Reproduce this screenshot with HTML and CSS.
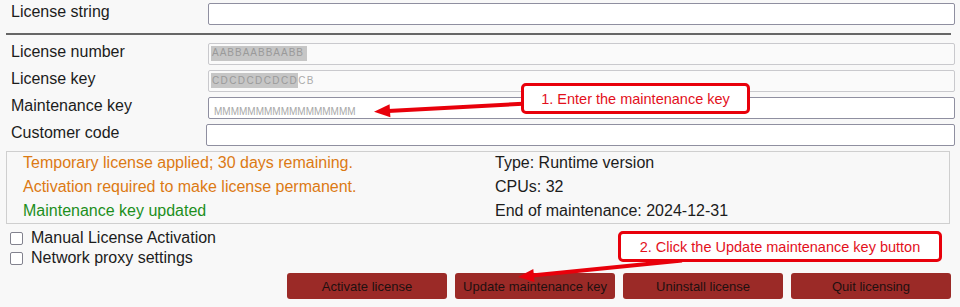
FILE: index.html
```html
<!DOCTYPE html>
<html lang="en">
<head>
    <meta charset="UTF-8">
    <meta name="viewport" content="width=device-width, initial-scale=1.0">
    <title>Licensing</title>
    <link rel="stylesheet" href="styles.css">
</head>
<body>

    <div class="panel">
        <div class="row">
            <span class="label">License string</span>
            <input class="field" type="text">
        </div>

        <hr class="divider">

        <div class="row">
            <span class="label">License number</span>
            <div class="field disabled"><span class="sel sel-a">AABBAABBAABB</span></div>
        </div>
        <div class="row">
            <span class="label">License key</span>
            <div class="field disabled"><span class="sel sel-c">CDCDCDCDCD</span><span class="rest">CB</span></div>
        </div>
        <div class="row">
            <span class="label">Maintenance key</span>
            <div class="field"><span class="typed">MMMMMMMMMMMMMMMMM</span></div>
        </div>
        <div class="row">
            <span class="label">Customer code</span>
            <input class="field wide" type="text">
        </div>

        <div class="status">
            <div class="status-col">
                <p class="warn">Temporary license applied; 30 days remaining.</p>
                <p class="warn">Activation required to make license permanent.</p>
                <p class="ok">Maintenance key updated</p>
            </div>
            <div class="status-col">
                <p>Type: Runtime version</p>
                <p>CPUs: 32</p>
                <p>End of maintenance: 2024-12-31</p>
            </div>
        </div>

        <div class="checks">
            <label class="check"><input type="checkbox" class="box"> Manual License Activation</label>
            <label class="check"><input type="checkbox" class="box"> Network proxy settings</label>
        </div>

        <div class="buttons">
            <button class="button">Activate license</button>
            <button class="button">Update maintenance key</button>
            <button class="button">Uninstall license</button>
            <button class="button">Quit licensing</button>
        </div>
    </div>

    <!-- annotation arrows -->
    <svg class="arrows" width="960" height="307" viewBox="0 0 960 307">
        <line x1="523" y1="103.7" x2="388" y2="111" stroke="#e8000b" stroke-width="4"/>
        <polygon points="374,111.7 390.4,117.3 389.6,104.3" fill="#e8000b"/>
        <line x1="682" y1="260.5" x2="532" y2="275.6" stroke="#e8000b" stroke-width="4"/>
        <polygon points="518,277 534.5,281.9 533.3,268.9" fill="#e8000b"/>
    </svg>

    <div class="callout callout-1">1. Enter the maintenance key</div>
    <div class="callout callout-2">2. Click the Update maintenance key button</div>

</body>
</html>
```

FILE: styles.css
```css
body {
    font-family: 'Liberation Sans', Arial, sans-serif;
    background-color: #f8f8f8;
    color: #1c1c1c;
    margin: 0;
    overflow: hidden;
}
.panel {
    padding: 3px 5px 0 6px;
}
.row {
    display: flex;
    align-items: flex-start;
    margin-bottom: 5px;
}
.label {
    width: 202px;
    flex-shrink: 0;
    box-sizing: border-box;
    padding-left: 5px;
    margin-top: 0;
    font-size: 16px;
    line-height: 18px;
}
.field {
    flex: 1;
    height: 22px;
    box-sizing: border-box;
    margin: 0;
    padding: 0 0 0 2px;
    border: 1px solid #8f8fa0;
    border-radius: 2px;
    background-color: #fff;
    font-family: 'Liberation Sans', Arial, sans-serif;
    overflow: hidden;
    white-space: nowrap;
}
.field.wide {
    margin-left: -2px;
}
.disabled {
    border-color: #c9c9cd;
    background-color: #fafafa;
}
.sel {
    display: inline-block;
    background-color: #c6c6c6;
    color: #9a9a9a;
    font-size: 10px;
    line-height: 11px;
    letter-spacing: 1px;
    padding: 1px 3px 3px 1px;
    margin-top: 2px;
    vertical-align: top;
}
.sel-c {
    letter-spacing: 1.4px;
    padding: 2px 0 2px 1px;
}
.rest {
    display: inline-block;
    color: #aaa;
    font-size: 10px;
    line-height: 11px;
    letter-spacing: 1.4px;
    padding-top: 4px;
    vertical-align: top;
}
.typed {
    display: inline-block;
    color: #a8a8a8;
    font-size: 10px;
    line-height: 13px;
    padding: 7px 0 0 3px;
}
.divider {
    border: none;
    border-top: 2px solid #666;
    height: 0;
    margin: 8px 4px 8px 0;
}
.status {
    display: grid;
    grid-template-columns: 472px 1fr;
    margin-right: 5px;
    padding: 1px 0 2px 16px;
    border: 1px solid #cfcfcf;
    font-size: 16px;
}
.status-col {
    display: flex;
    flex-direction: column;
    gap: 4px;
}
.status p {
    margin: 0;
    line-height: 20px;
}
.warn {
    color: #dc7a14;
}
.ok {
    color: #1d8f1d;
}
.checks {
    margin-top: 4px;
}
.check {
    display: flex;
    align-items: center;
    gap: 8px;
    font-size: 16px;
    line-height: 20px;
}
.box {
    appearance: none;
    width: 13px;
    height: 13px;
    margin: 0 0 0 4px;
    border: 1px solid #82828e;
    border-radius: 2px;
    background-color: #fff;
}
.buttons {
    display: flex;
    justify-content: flex-end;
    gap: 8px;
    margin: 5px 4px 0 0;
}
.button {
    width: 160px;
    height: 26px;
    background-color: #9b2a27;
    color: #1e1010;
    border: none;
    border-radius: 3px;
    font-family: 'Liberation Sans', Arial, sans-serif;
    font-size: 13px;
    padding: 0;
    cursor: pointer;
}
.arrows {
    position: absolute;
    top: 0;
    left: 0;
    pointer-events: none;
}
.callout {
    position: absolute;
    height: 31px;
    box-sizing: border-box;
    display: flex;
    align-items: center;
    justify-content: center;
    border: 3px solid #e8000b;
    border-radius: 5px;
    background-color: #fff;
    color: #e3101c;
    font-size: 14.5px;
}
.callout-1 {
    left: 521px;
    top: 83px;
    width: 229px;
}
.callout-2 {
    left: 618px;
    top: 231px;
    width: 324px;
}
```
